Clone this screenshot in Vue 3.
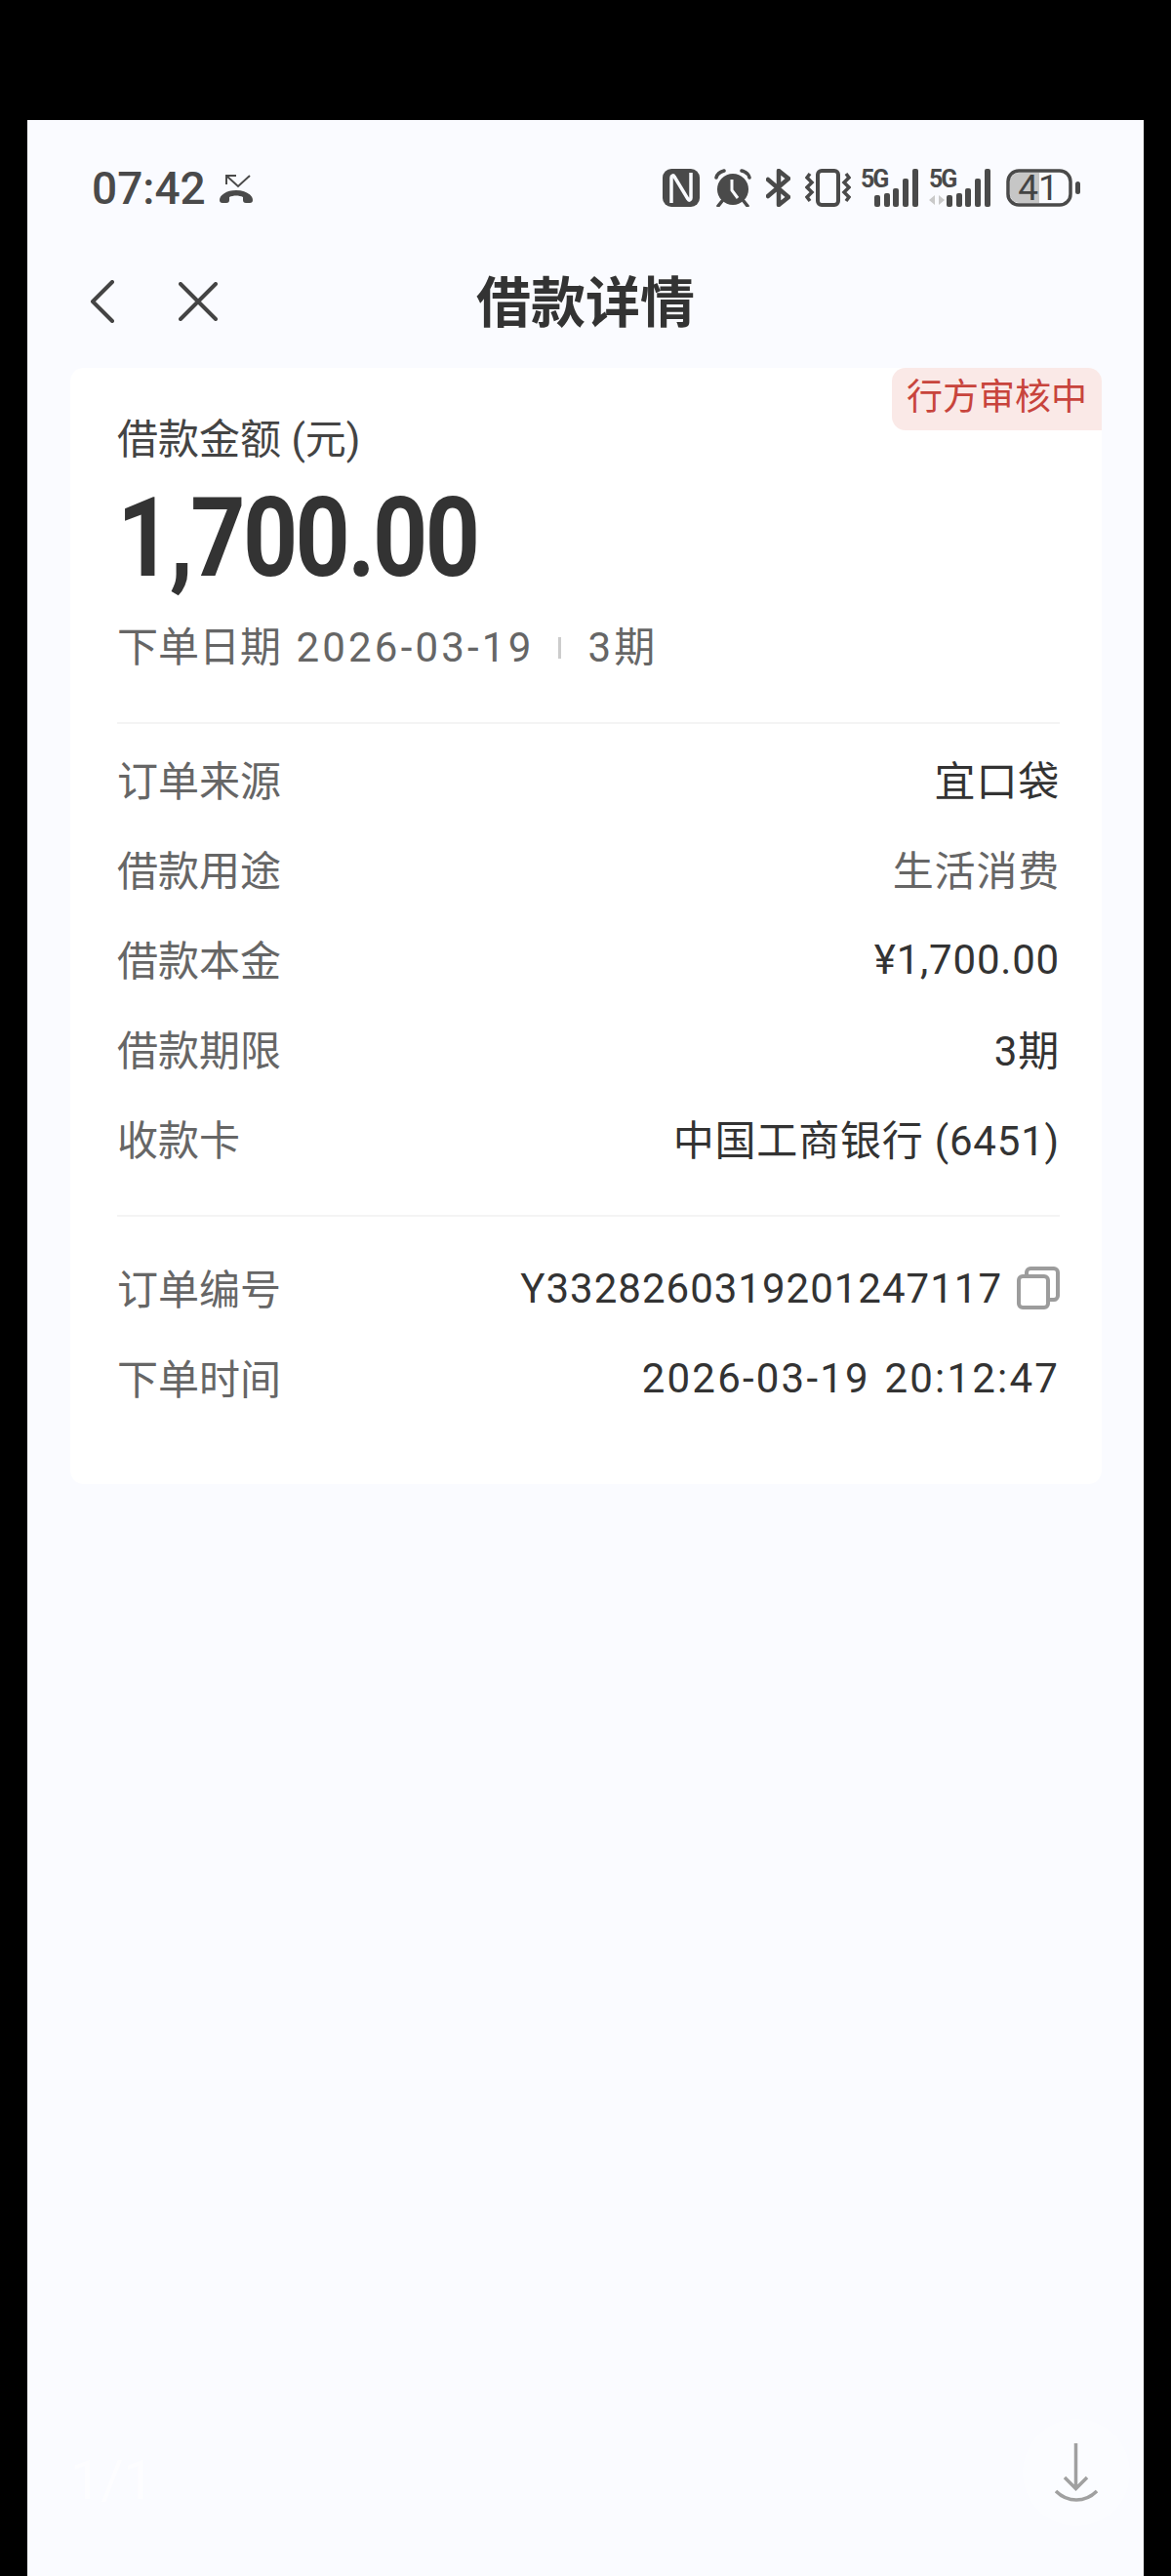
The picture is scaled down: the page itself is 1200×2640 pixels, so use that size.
<template>
  <div class="screen">
    <div class="status-bar">
      <div class="status-left">
        <span class="time">07:42</span>
        <svg width="36" height="30" viewBox="0 0 36 30" fill="none">
          <path d="M7 11V2h10M7 2l12 11L31 2" stroke="#4a4a4a" stroke-width="2" />
          <path d="M0 27c0-5 7-10 17-10s17 5 17 10c0 2-1 3-3 3h-4c-2 0-3-1-3-3v-3c-4-2-10-2-14 0v3c0 2-1 3-3 3H3c-2 0-3-1-3-3z" fill="#4a4a4a" />
        </svg>
      </div>
      <div class="status-right">
        <svg width="38" height="39" viewBox="0 0 38 39">
          <rect width="38" height="39" rx="9" fill="#4a4a4a" />
          <path d="M9 35V9c0-2 2-3 3-1l14 23c1 2 3 1 3-1V4" fill="none" stroke="#fafbff" stroke-width="3.500" />
        </svg>
        <svg width="38" height="39" viewBox="0 0 38 39">
          <circle cx="19" cy="21" r="16" fill="#4a4a4a" />
          <path d="M18 11v11l6 8" fill="none" stroke="#fafbff" stroke-width="3" />
          <path d="M2 9c1-4 4-6 8-7M36 9c-1-4-4-6-8-7M8 33l-4 5M30 33l4 5" fill="none" stroke="#4a4a4a" stroke-width="3.500" stroke-linecap="round" />
        </svg>
        <svg width="25" height="39" viewBox="0 0 25 39">
          <path d="M2 11l21 18-10 8V2l10 8L2 28" fill="none" stroke="#4a4a4a" stroke-width="4.500" stroke-linejoin="round" stroke-linecap="round" />
        </svg>
        <svg width="47" height="39" viewBox="0 0 47 39" fill="none" stroke="#4a4a4a">
          <rect x="13" y="2" width="21" height="35" rx="4" stroke-width="4" />
          <path d="M5 5L2 9l5 5-5 5 5 5-5 5 3 4M42 5l3 4-5 5 5 5-5 5 5 5-3 4" stroke-width="3.500" />
        </svg>
        <svg class="signal" width="60" height="45" viewBox="0 -6 60 45">
          <text x="0" y="19" class="net">5G</text>
          <rect x="14" y="27" width="6" height="12" rx="2" />
          <rect x="24" y="25" width="6" height="14" rx="2" />
          <rect x="33" y="20" width="6" height="19" rx="2" />
          <rect x="43" y="10" width="6" height="29" rx="2" />
          <rect x="53" y="0" width="6" height="39" rx="2" />
        </svg>
        <svg class="signal" width="64" height="45" viewBox="0 -6 64 45">
          <text x="0" y="19" class="net">5G</text>
          <path d="M6 27v10l-6-5zM10 27v10l6-5z" fill="#c9c9c9" />
          <rect x="18" y="27" width="6" height="12" rx="2" />
          <rect x="28" y="25" width="6" height="14" rx="2" />
          <rect x="37" y="20" width="6" height="19" rx="2" />
          <rect x="47" y="10" width="6" height="29" rx="2" />
          <rect x="57" y="0" width="6" height="39" rx="2" />
        </svg>
        <div class="battery">
          <svg width="76" height="39" viewBox="0 0 76 39">
            <path d="M13 4h21v31H13a9 9 0 0 1-9-9V13a9 9 0 0 1 9-9z" fill="#c6c6c6" />
            <rect x="2" y="2" width="64" height="35" rx="11" fill="none" stroke="#4a4a4a" stroke-width="3.500" />
            <rect x="71" y="13" width="5" height="13" rx="2.500" fill="#4a4a4a" />
          </svg>
          <span class="level">41</span>
        </div>
      </div>
    </div>

    <div class="nav">
      <div class="nav-icons">
        <svg width="26" height="44" viewBox="0 0 26 44" fill="none" stroke="#444" stroke-width="4" stroke-linecap="round" stroke-linejoin="round">
          <path d="M23 2L3 22l20 20" />
        </svg>
        <svg width="40" height="40" viewBox="0 0 40 40" fill="none" stroke="#444" stroke-width="4" stroke-linecap="round">
          <path d="M2 2l36 36M38 2L2 38" />
        </svg>
      </div>
      <h1 class="title">借款详情</h1>
    </div>

    <div class="card">
      <div class="badge">行方审核中</div>
      <div class="summary">
        <div class="amount-label">借款金额 (元)</div>
        <div class="amount">1,700.00</div>
        <div class="meta">
          <span>下单日期 <span class="num">2026-03-19</span></span>
          <i class="meta-line"></i>
          <span><span class="num">3</span>期</span>
        </div>
      </div>

      <div class="section">
        <div v-for="row in loanRows" :key="row.label" class="row">
          <span class="label">{{ row.label }}</span>
          <span class="value" :class="{ muted: row.muted, digits: row.digits }">{{ row.value }}</span>
        </div>
      </div>

      <div class="section">
        <div class="row">
          <span class="label">订单编号</span>
          <span class="value digits order-no">
            Y3328260319201247117
            <svg width="44" height="44" viewBox="0 0 44 44" fill="none" stroke="#9c9c9c" stroke-width="4">
              <rect x="2" y="10" width="30" height="32" rx="4" />
              <path d="M10 10V6c0-2 2-4 4-4h24c2 0 4 2 4 4v24c0 2-2 4-4 4h-6" />
            </svg>
          </span>
        </div>
        <div class="row">
          <span class="label">下单时间</span>
          <span class="value digits datetime">2026-03-19 20:12:47</span>
        </div>
      </div>
    </div>

    <div class="pager">1/1</div>
    <button class="download" type="button">
      <svg width="44" height="60" viewBox="0 0 44 60" fill="none" stroke="#a0a0a0" stroke-width="3.500">
        <path d="M21.500 0v46M10 35l11.500 11.500L33 35" />
        <path d="M1 49c12 12 30 12 42 0" />
      </svg>
    </button>
  </div>
</template>

<script setup>
const loanRows = [
  { label: '订单来源', value: '宜口袋' },
  { label: '借款用途', value: '生活消费', muted: true },
  { label: '借款本金', value: '¥1,700.00', digits: true },
  { label: '借款期限', value: '3期' },
  { label: '收款卡', value: '中国工商银行 (6451)' },
];
</script>

<style>
body {
  margin: 0;
  background: #000;
}
</style>

<style scoped>
.screen {
  position: relative;
  box-sizing: border-box;
  width: 1144px;
  height: 2517px;
  margin: 123px 0 0 28px;
  padding: 0 44px;
  background: #fafbff;
  font-family: Roboto, "Noto Sans CJK SC", sans-serif;
  color: #333;
}
.status-bar {
  height: 136px;
  padding: 50px 0 0 22px;
  box-sizing: border-box;
  display: flex;
  justify-content: space-between;
  margin-right: 21px;
}
.status-left {
  display: flex;
  align-items: center;
  gap: 14px;
  height: 39px;
}
.time {
  font-size: 46px;
  font-weight: 500;
  color: #4a4a4a;
}
.status-right {
  display: flex;
  align-items: flex-end;
  gap: 15px;
  height: 39px;
}
.signal {
  margin-left: -5px;
}
.signal rect {
  fill: #4a4a4a;
}
.net {
  font-size: 25px;
  font-weight: 700;
  letter-spacing: -2px;
  fill: #4a4a4a;
}
.battery {
  position: relative;
  width: 76px;
  height: 39px;
}
.level {
  position: absolute;
  left: 2px;
  top: 0;
  width: 62px;
  text-align: center;
  font-size: 37px;
  line-height: 39px;
  color: #444;
}
.nav {
  position: relative;
  height: 118px;
  display: flex;
  justify-content: center;
}
.nav-icons {
  position: absolute;
  left: 20px;
  top: 28px;
  display: flex;
  align-items: center;
  gap: 65px;
}
.title {
  margin: 0;
  font-size: 56px;
  font-weight: 700;
  line-height: 104px;
  color: #333;
}
.card {
  position: relative;
  box-sizing: border-box;
  width: 1057px;
  height: 1144px;
  padding: 0 43px 0 48px;
  background: #fff;
  border-radius: 14px;
}
.badge {
  position: absolute;
  top: 0;
  right: 0;
  padding: 0 15px;
  height: 64px;
  line-height: 62px;
  font-size: 37px;
  color: #c8443c;
  background: #fae9e7;
  border-radius: 14px 14px 0 14px;
}
.summary {
  padding-top: 49px;
  height: 363px;
  box-sizing: border-box;
}
.amount-label {
  font-size: 42px;
  line-height: 50px;
  color: #444;
}
.amount {
  font-size: 114px;
  font-weight: 700;
  line-height: 130px;
  margin-top: 10px;
  letter-spacing: -3px;
  color: #333;
  transform: scaleX(0.86);
  transform-origin: left center;
}
.meta {
  display: flex;
  align-items: center;
  margin-top: 23px;
  font-size: 42px;
  line-height: 50px;
  color: #666;
  word-spacing: 5px;
}
.meta-line {
  width: 3px;
  height: 22px;
  margin: 0 27px 0 25px;
  background: #ccc;
}
.num {
  letter-spacing: 3.200px;
}
.section {
  border-top: 2px solid #f4f4f4;
  padding: 9px 0 34px;
}
.section + .section {
  padding-top: 25px;
}
.row {
  display: flex;
  justify-content: space-between;
  align-items: center;
  height: 92px;
  font-size: 42px;
}
.label {
  color: #666;
}
.value {
  color: #333;
  letter-spacing: 0.800px;
}
.value.muted {
  color: #666;
}
.digits {
  padding-top: 4px;
}
.datetime {
  letter-spacing: 2.200px;
  word-spacing: 2px;
}
.order-no {
  display: flex;
  align-items: center;
  gap: 15px;
  letter-spacing: 1px;
}
.pager {
  position: absolute;
  left: 44px;
  top: 2387px;
  font-size: 56px;
  line-height: 64px;
  color: #fff;
  opacity: 0.6;
}
.download {
  position: absolute;
  left: 1020px;
  top: 2356px;
  width: 110px;
  height: 110px;
  padding: 0;
  border: none;
  border-radius: 50%;
  background: rgba(255, 255, 255, 0.25);
  display: flex;
  align-items: center;
  justify-content: center;
}
</style>
